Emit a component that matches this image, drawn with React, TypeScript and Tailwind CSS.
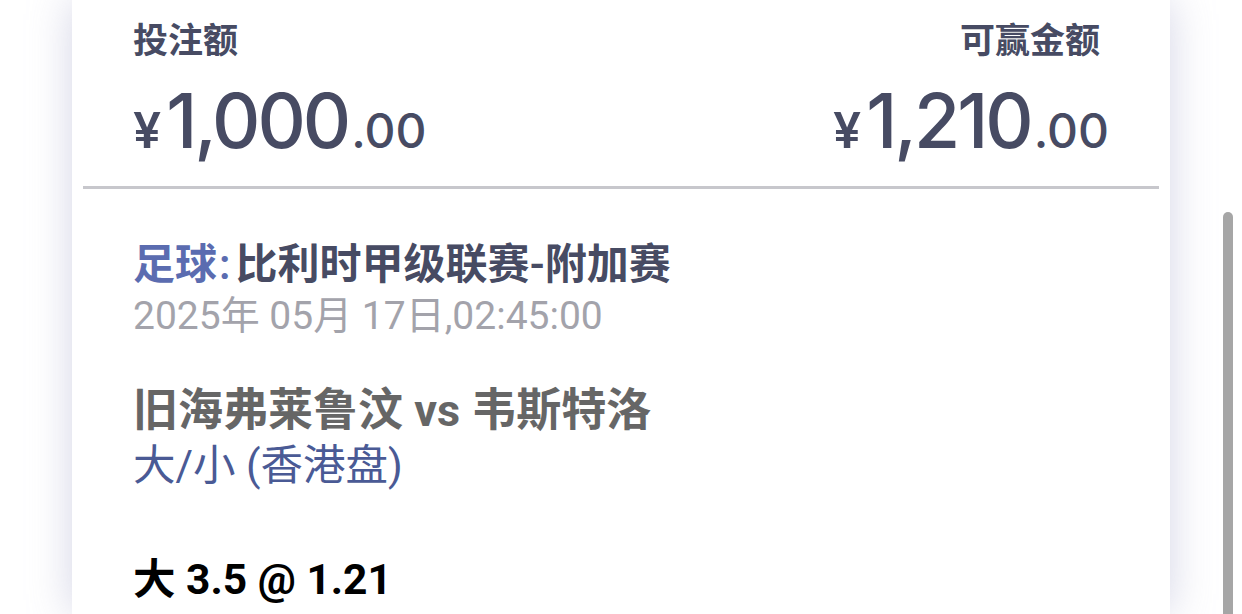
import React from "react";

const cjk = "font-['Roboto','Noto_Sans_CJK_SC',sans-serif]";
const inter = "font-['Inter','Noto_Sans_CJK_SC',sans-serif]";

function Amount({ whole, frac }: { whole: string; frac: string }) {
  return (
    <div className={`flex items-baseline text-[#474b63] ${inter}`}>
      <span className="text-[50px] leading-none font-semibold mr-[5px]">¥</span>
      <span className="text-[75px] leading-[75px] font-medium tracking-[-3px]">{whole}</span>
      <span className="text-[48px] leading-none font-medium ml-[3px]">.{frac}</span>
    </div>
  );
}

export default function App() {
  return (
    <div className="relative w-[1242px] h-[614px] overflow-hidden bg-white">
      <div className="ml-[72px] w-[1098px] h-full bg-white shadow-[0_0_40px_rgba(160,162,200,0.45)]">
        <div className="px-[61px] pt-[22px] flex justify-between">
          <div className="flex flex-col">
            <div className={`text-[35px] leading-[40px] font-semibold text-[#474b63] ${cjk}`}>投注额</div>
            <div className="mt-[21px]">
              <Amount whole="1,000" frac="00" />
            </div>
          </div>
          <div className="flex flex-col items-end">
            <div className={`text-[35px] leading-[40px] font-semibold text-[#474b63] pr-[9px] ${cjk}`}>可赢金额</div>
            <div className="mt-[21px]">
              <Amount whole="1,210" frac="00" />
            </div>
          </div>
        </div>
        <div className="mx-[11px] mt-[28px] h-[3px] bg-[#c7c7cc]" />
        <div className={`px-[61px] ${cjk}`}>
          <div className="mt-[51px] text-[42px] leading-[50px] font-semibold text-[#474b63]">
            <span className="text-[#5b6cb0]">足球<span className="ml-[2px] mr-[5px]">:</span></span>比利时甲级联赛-附加赛
          </div>
          <div className="mt-[5px] text-[39px] leading-[42px] text-[#a3a3ab]">2025年 05月 17日,02:45:00</div>
          <div className="mt-[48px] text-[45px] leading-[52px] font-bold text-[#666666]">旧海弗莱鲁汶 vs 韦斯特洛</div>
          <div className="mt-[4px] text-[42.5px] leading-[50px] text-[#4a5a95]">大/小 (香港盘)</div>
          <div className="mt-[64px] text-[42.5px] leading-[50px] font-bold text-black">大 3.5 @ 1.21</div>
        </div>
      </div>
      <div className="absolute left-[1223px] top-[212px] w-[10px] h-[420px] rounded-full bg-[#a6a6a6]" />
    </div>
  );
}
